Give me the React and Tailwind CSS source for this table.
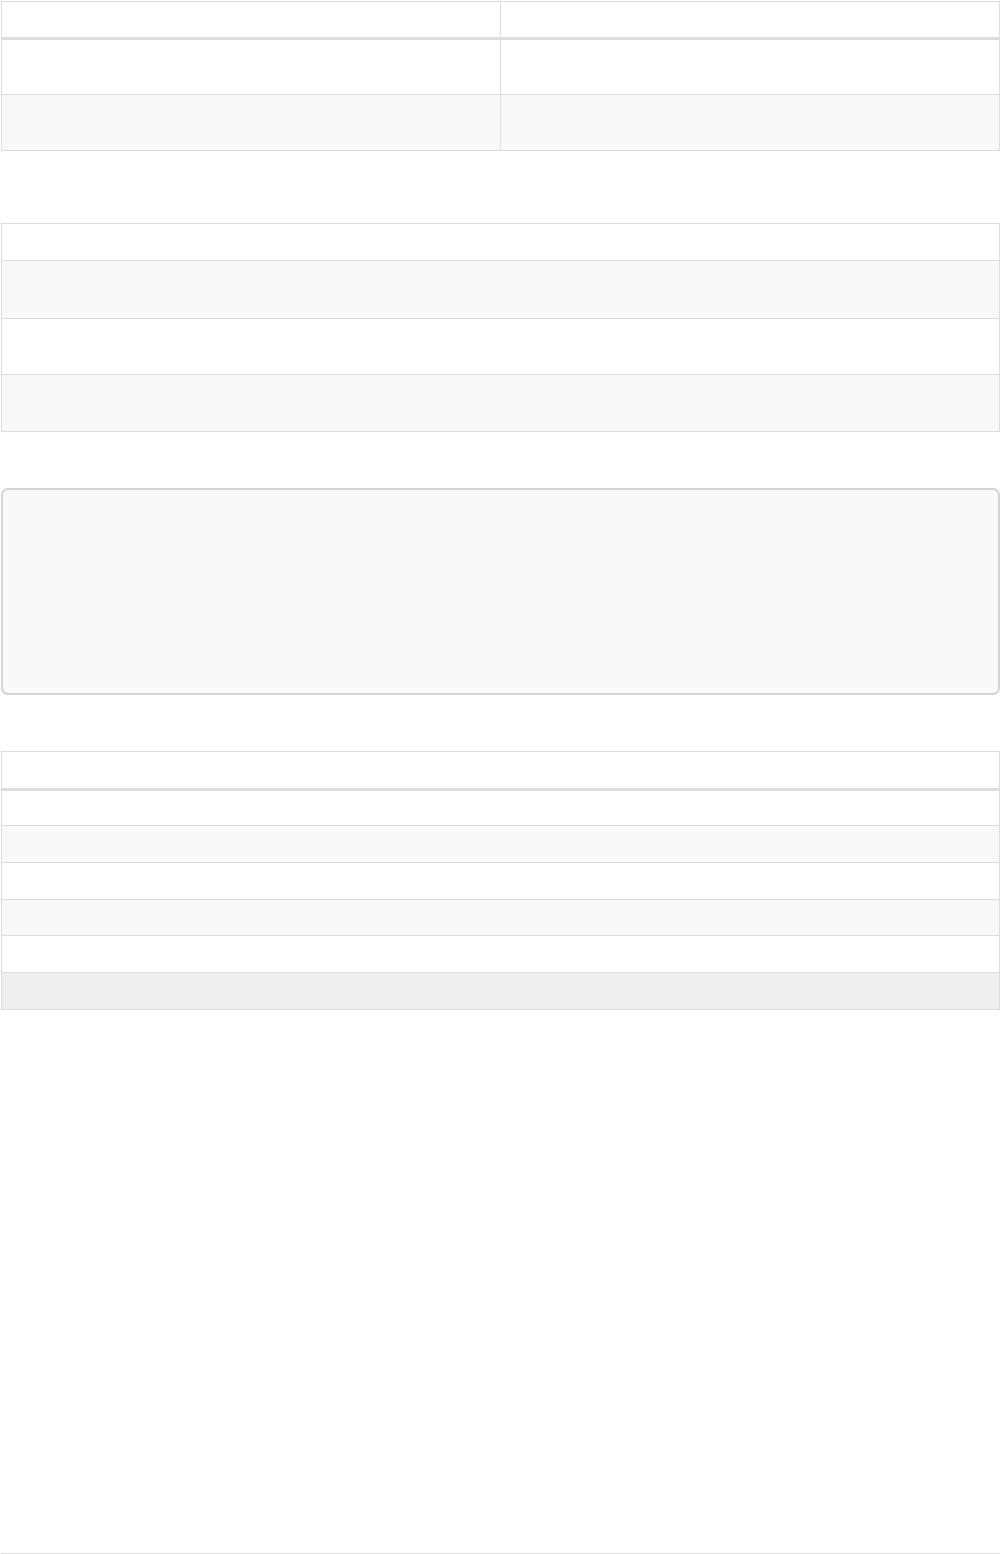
export default function App() {
  return (
    <div className="w-[1000px] min-h-[1554px] bg-white pl-[1px] pt-[1px] flex flex-col" style={{ fontFamily: '"Liberation Sans", Arial, sans-serif' }}>
      {/* Table 1 */}
      <div className="w-[999px] border-x border-t border-[#dddddd]">
        <div className="grid grid-cols-[499px_499px] h-[38px] border-b-[3px] border-[#dddddd]">
          <div className="border-r border-[#dddddd]"></div>
          <div></div>
        </div>
        <div className="grid grid-cols-[499px_499px] h-[55px] border-b border-[#dddddd] bg-white">
          <div className="border-r border-[#dddddd]"></div>
          <div></div>
        </div>
        <div className="grid grid-cols-[499px_499px] h-[56px] border-b border-[#dddddd] bg-[#f8f8f8]">
          <div className="border-r border-[#dddddd]"></div>
          <div></div>
        </div>
      </div>

      {/* Table 2 */}
      <div className="mt-[72px] w-[999px] border-x border-t border-[#dddddd]">
        <div className="h-[37px] border-b border-[#dddddd] bg-white"></div>
        <div className="h-[58px] border-b border-[#dddddd] bg-[#f8f8f8]"></div>
        <div className="h-[56px] border-b border-[#dddddd] bg-white"></div>
        <div className="h-[57px] border-b border-[#dddddd] bg-[#f8f8f8]"></div>
      </div>

      {/* Box */}
      <div className="mt-[56px] w-[999px] h-[207px] rounded-[7px] border-2 border-[#d4d4d4] bg-[#f9f9f9]"></div>

      {/* Table 3 */}
      <div className="mt-[56px] w-[999px] border-x border-t border-[#dddddd]">
        <div className="h-[39px] border-b-[3px] border-[#dddddd] bg-white"></div>
        <div className="h-[35px] border-b border-[#dddddd] bg-white"></div>
        <div className="h-[37px] border-b border-[#dddddd] bg-[#f8f8f8]"></div>
        <div className="h-[37px] border-b border-[#dddddd] bg-white"></div>
        <div className="h-[36px] border-b border-[#dddddd] bg-[#f8f8f8]"></div>
        <div className="h-[37px] border-b border-[#dddddd] bg-white"></div>
        <div className="h-[37px] border-b border-[#dddddd] bg-[#efefef]"></div>
      </div>

      <div className="flex-1"></div>
      <div className="w-[999px] border-b border-[#dddddd]"></div>
    </div>
  );
}
